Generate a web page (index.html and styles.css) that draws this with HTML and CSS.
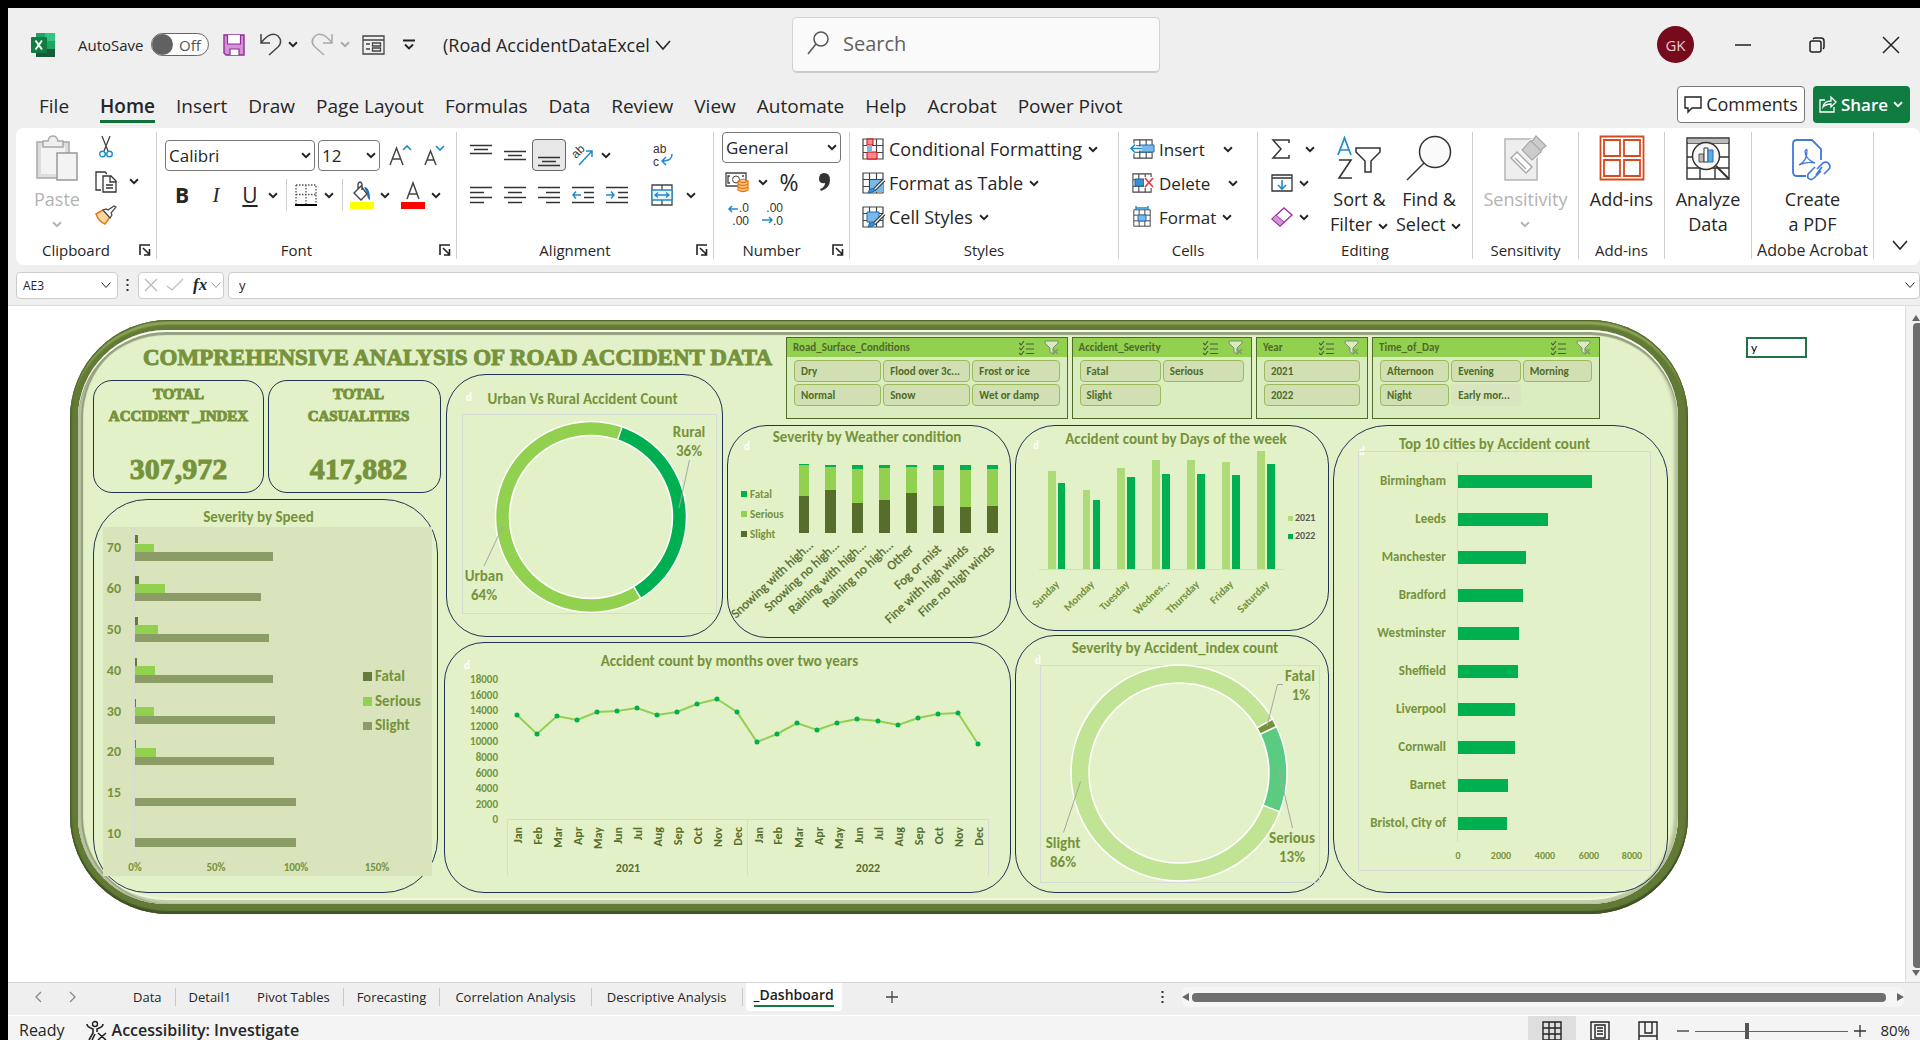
FILE: index.html
```html
<!DOCTYPE html>
<html lang="en">
<head>
<meta charset="utf-8">
<title>Road AccidentDataExcel</title>
<link rel="stylesheet" href="styles.css">
</head>
<body>
<svg class="defs" aria-hidden="true">
  <symbol id="chev" viewBox="0 0 10 8"><path d="M1.500 2 5 5.500 8.500 2" fill="none" stroke="currentColor" stroke-width="1.700"/></symbol>
  <symbol id="chev-big" viewBox="0 0 16 12"><path d="M1 2 8 10 15 2" fill="none" stroke="currentColor" stroke-width="1.600"/></symbol>
  <symbol id="launch" viewBox="0 0 12 12"><path d="M1 11V1h10M4 4l6 6M10.500 5v6H5" fill="none" stroke="#222" stroke-width="1.600"/></symbol>
  <symbol id="multi" viewBox="0 0 15 14"><path d="M0 2l2 2 3-4M0 7l2 2 3-4M0 12l2 2 3-4M7 3h8M7 8h8M7 12.500h8" fill="none" stroke="#4c5a3c" stroke-width="1.100"/></symbol>
  <symbol id="funnel" viewBox="0 0 16 16"><path d="M1 1h13v2L9 8v6l-3-2V8L1 3z" fill="#d9ecc0" stroke="#7f8f70"/><path d="M9 9l5 5M14 9l-5 5" stroke="#7f9a60" stroke-width="1.200"/></symbol>
  <symbol id="sheet" viewBox="0 0 22 22"><path d="M1 1h20v20H1zM1 7.500h20M1 14.500h20M7.500 1v20M14.500 1v20" fill="#fff" stroke="#444" stroke-width="1.200"/></symbol>
</svg>
<div class="app">
  <header class="titlebar">
    <svg class="logo" width="24" height="24" viewBox="0 0 24 24"><path d="M5 0h19v24H5z" fill="#21a366"/><path d="M14 0h10v8H14z" fill="#33c481"/><path d="M5 8h9v8H5z" fill="#107c41"/><path d="M14 16h10v8H5v-8z" fill="#185c37"/><rect y="4" width="16" height="16" rx="1" fill="#107c41"/><path d="M4.500 7.500l6.500 9M11 7.500l-6.500 9" stroke="#fff" stroke-width="2"/></svg>
    <label class="autosave" for="autosave">AutoSave</label>
    <span class="toggle"><input id="autosave" type="checkbox"><span>Off</span></span>
    <button class="ico save" aria-label="Save"><svg width="22" height="22" viewBox="0 0 22 22"><path d="M1 1h20v20H3l-2-2z" fill="#d691d9" stroke="#8d2f96" stroke-width="1.400"/><path d="M4.500 1v9h13V1M7 21v-6h9v6" fill="#fff" stroke="#8d2f96" stroke-width="1.200"/></svg></button>
    <button class="ico undo" aria-label="Undo"><svg width="22" height="23" viewBox="0 0 22 23"><path d="M1 1v9h9M1 10C8 1 14 0 18 3c4 4 3 8 0 11l-9 8" fill="none" stroke="#444" stroke-width="1.500"/></svg><svg class="cv"><use href="#chev"/></svg></button>
    <button class="ico redo" aria-label="Redo"><svg width="22" height="23" viewBox="0 0 22 23"><path d="M21 1v9h-9M21 10C14 1 8 0 4 3 0 7 1 11 4 14l9 8" fill="none" stroke="#aaa" stroke-width="1.500"/></svg><svg class="cv"><use href="#chev"/></svg></button>
    <button class="ico form" aria-label="Form"><svg width="23" height="20" viewBox="0 0 23 20"><path d="M1 1h21v18H1zM1 5h21M4 9h4M4 14h4M10.500 8h8v3h-8zM10.500 13h8v3h-8z" fill="none" stroke="#444" stroke-width="1.300"/></svg></button>
    <button class="ico custom" aria-label="Customize"><svg width="12" height="12" viewBox="0 0 12 12"><path d="M0 1.500h12M2 5.500l4 4 4-4" fill="none" stroke="#222" stroke-width="1.800"/></svg></button>
    <button class="doc">(Road AccidentDataExcel <svg width="16" height="12"><use href="#chev-big"/></svg></button>
    <label class="search"><svg width="22" height="24" viewBox="0 0 22 24"><circle cx="14" cy="8" r="7" fill="none" stroke="#555" stroke-width="1.500"/><path d="M9 13 1 23" stroke="#555" stroke-width="1.500"/></svg><input type="text" placeholder="Search" aria-label="Search"></label>
    <div class="window">
      <button class="avatar">GK</button>
      <button aria-label="Minimize"><svg width="16" height="16"><path d="M0 8h16" stroke="#222" stroke-width="1.500"/></svg></button>
      <button aria-label="Restore"><svg width="16" height="16" viewBox="0 0 16 16"><rect x="1" y="4" width="11" height="11" rx="2" fill="none" stroke="#222" stroke-width="1.500"/><path d="M4 2q1-1 2-1h6q3 0 3 3v6q0 1-1 2" fill="none" stroke="#222" stroke-width="1.500"/></svg></button>
      <button aria-label="Close"><svg width="16" height="16"><path d="M0 0l16 16M16 0 0 16" stroke="#222" stroke-width="1.500"/></svg></button>
    </div>
  </header>
  <nav class="tabs">
    <a href="#">File</a><a href="#" class="on">Home</a><a href="#">Insert</a><a href="#">Draw</a><a href="#">Page Layout</a><a href="#">Formulas</a><a href="#">Data</a><a href="#">Review</a><a href="#">View</a><a href="#">Automate</a><a href="#">Help</a><a href="#">Acrobat</a><a href="#">Power Pivot</a>
    <button class="comments"><svg width="18" height="18" viewBox="0 0 18 18"><path d="M1 2h16v11H8l-4 4v-4H1z" fill="none" stroke="#222" stroke-width="1.400"/></svg>Comments</button>
    <button class="share"><svg width="18" height="18" viewBox="0 0 18 18"><path d="M6 5H1v12h14v-5M4 12q1-6 8-6V2l5 5-5 5V9Q7 9 4 12z" fill="none" stroke="#fff" stroke-width="1.300"/></svg>Share<svg class="cv"><use href="#chev"/></svg></button>
  </nav>
  <section class="ribbon">
    <div class="group clip">
      <div class="body">
        <button class="big dim"><svg width="42" height="46" viewBox="0 0 42 46"><path d="M1 7h32v36H1z" fill="#ddd" stroke="#a9a9a9" stroke-width="1.500"/><path d="M5 11h24v28H5z" fill="#f3f3f3"/><path d="M7 12V6h5q1-5 5-5t5 5h5v6z" fill="#eee" stroke="#a9a9a9" stroke-width="1.500"/><path d="M21 18h20v27H21z" fill="#f3f3f3" stroke="#999" stroke-width="1.500"/></svg>Paste<svg class="cv"><use href="#chev"/></svg></button>
        <div class="stack">
          <button aria-label="Cut"><svg width="14" height="22" viewBox="0 0 14 22"><path d="M3 0l6 15M11 0 5 15" stroke="#444" stroke-width="1.300"/><circle cx="3.500" cy="18" r="2.800" fill="none" stroke="#1e8bcd" stroke-width="1.400"/><circle cx="10.500" cy="18" r="2.800" fill="none" stroke="#1e8bcd" stroke-width="1.400"/></svg></button>
          <button aria-label="Copy"><svg width="22" height="22" viewBox="0 0 22 22"><path d="M6 19H1V1h9l2 2M8 5h8l5 5v11H8zM15 5v6h6M11 14h7M11 17h7" fill="none" stroke="#333" stroke-width="1.300"/></svg></button>
          <button aria-label="Format Painter"><svg width="22" height="18" viewBox="0 0 22 18"><path d="M1 8l7-4 7 7-5 7q-6-2-9-10z" fill="#fbd7a5" stroke="#e57a12" stroke-width="1.500"/><path d="M8 4l3-1 2 1 6-4 2 1-5 6 1 2-2 3z" fill="#fff" stroke="#444" stroke-width="1.200"/></svg></button>
        </div>
        <svg class="cv"><use href="#chev"/></svg>
      </div>
      <div class="cap more">Clipboard<svg width="12" height="12"><use href="#launch"/></svg></div>
    </div>
    <div class="group font">
      <div class="body col">
        <div class="row r1">
          <span class="sel"><select aria-label="Font"><option>Calibri</option></select><svg class="cv"><use href="#chev"/></svg></span>
          <span class="sel small"><select aria-label="Size"><option>12</option></select><svg class="cv"><use href="#chev"/></svg></span>
          <button class="t" aria-label="Grow font"><svg width="22" height="22" viewBox="0 0 22 22"><path d="M1 21 7.500 4 14 21M3.500 15h8" fill="none" stroke="#444" stroke-width="1.500"/><path d="M14 6l4-4 4 4" fill="none" stroke="#1e8bcd" stroke-width="1.600"/></svg></button>
          <button class="t" aria-label="Shrink font"><svg width="20" height="22" viewBox="0 0 20 22"><path d="M1 21 6.500 7 12 21M3 16h7" fill="none" stroke="#444" stroke-width="1.500"/><path d="M12 2l4 4 4-4" fill="none" stroke="#1e8bcd" stroke-width="1.600"/></svg></button>
        </div>
        <div class="row r2">
          <button class="t"><b>B</b></button><button class="t"><i>I</i></button><button class="t"><u>U</u></button><svg class="cv"><use href="#chev"/></svg>
          <span class="bar"></span>
          <button class="t" aria-label="Borders"><svg width="22" height="22" viewBox="0 0 22 22"><path d="M1 1h20v19M1 1v19M11 1v19M1 10.500h20" fill="none" stroke="#555" stroke-dasharray="1.500 1.500" stroke-width="1.300"/><path d="M0 21h22" stroke="#000" stroke-width="2"/></svg></button><svg class="cv"><use href="#chev"/></svg>
          <span class="bar"></span>
          <button class="t" aria-label="Fill color"><svg width="24" height="28" viewBox="0 0 24 28"><path d="M4 12l7-7 6 8-6 6zM8 8V3q2-4 4 0v6" fill="none" stroke="#444" stroke-width="1.400"/><path d="M14 6q6 0 6 13-3-1-3-7z" fill="#1e6fb8"/><path d="M0 21h24v7H0z" fill="#ff0"/></svg></button><svg class="cv"><use href="#chev"/></svg>
          <button class="t" aria-label="Font color"><svg width="24" height="28" viewBox="0 0 24 28"><path d="M6 18 12 2l6 16M8 13h8" fill="none" stroke="#444" stroke-width="1.500"/><path d="M0 21h24v7H0z" fill="red"/></svg></button><svg class="cv"><use href="#chev"/></svg>
        </div>
      </div>
      <div class="cap more">Font<svg width="12" height="12"><use href="#launch"/></svg></div>
    </div>
    <div class="group align">
      <div class="body col">
        <div class="row r1">
          <button class="t" aria-label="Top"><svg width="22" height="22"><path d="M0 1.500h22M4 5.500h14M0 9.500h22" stroke="#333" stroke-width="1.300"/></svg></button>
          <button class="t" aria-label="Middle"><svg width="22" height="22"><path d="M0 7.500h22M4 11.500h14M0 15.500h22" stroke="#333" stroke-width="1.300"/></svg></button>
          <button class="t pressed" aria-label="Bottom"><svg width="22" height="22"><path d="M0 13.500h22M4 17.500h14M0 21.500h22" stroke="#333" stroke-width="1.300"/></svg></button>
          <button class="t" aria-label="Orientation"><svg width="22" height="22" viewBox="0 0 22 22"><text class="ab" transform="translate(4 15) rotate(-45)">ab</text><path d="M7 21 20 7M14 7h6v6" fill="none" stroke="#1e8bcd" stroke-width="1.500"/></svg></button><svg class="cv"><use href="#chev"/></svg>
          <button class="t wrap" aria-label="Wrap text"><svg width="22" height="26" viewBox="0 0 22 26"><text class="ab" x="1" y="11">ab</text><text class="ab" x="1" y="24">c</text><path d="M20 12q0 7-9 7M14 15l-4 4 4 4" fill="none" stroke="#1e8bcd" stroke-width="1.500"/></svg></button>
        </div>
        <div class="row r2">
          <button class="t" aria-label="Left"><svg width="22" height="18"><path d="M0 1.500h22M0 6.500h14M0 11.500h22M0 16.500h14" stroke="#333" stroke-width="1.300"/></svg></button>
          <button class="t" aria-label="Center"><svg width="22" height="18"><path d="M0 1.500h22M4 6.500h14M0 11.500h22M4 16.500h14" stroke="#333" stroke-width="1.300"/></svg></button>
          <button class="t" aria-label="Right"><svg width="22" height="18"><path d="M0 1.500h22M8 6.500h14M0 11.500h22M8 16.500h14" stroke="#333" stroke-width="1.300"/></svg></button>
          <button class="t" aria-label="Decrease indent"><svg width="22" height="18"><path d="M0 1.500h22M12 6.500h10M12 11.500h10M0 16.500h22" stroke="#333" stroke-width="1.300"/><path d="M9 9H1M4 5.500 1 9l3 3.500" fill="none" stroke="#1e8bcd" stroke-width="1.500"/></svg></button>
          <button class="t" aria-label="Increase indent"><svg width="22" height="18"><path d="M0 1.500h22M12 6.500h10M12 11.500h10M0 16.500h22" stroke="#333" stroke-width="1.300"/><path d="M0 9h8M5 5.500 8 9l-3 3.500" fill="none" stroke="#1e8bcd" stroke-width="1.500"/></svg></button>
          <button class="t merge" aria-label="Merge"><svg width="22" height="22" viewBox="0 0 22 22"><path d="M1 1h20v20H1zM11 1v5M11 16v5" fill="#fff" stroke="#444" stroke-width="1.300"/><path d="M1 6h20v10H1zM4 11h14M7 8.500 4 11l3 2.500M15 8.500l3 2.500-3 2.500" fill="#eaf4fb" stroke="#1e8bcd" stroke-width="1.300"/></svg></button><svg class="cv"><use href="#chev"/></svg>
        </div>
      </div>
      <div class="cap more">Alignment<svg width="12" height="12"><use href="#launch"/></svg></div>
    </div>
    <div class="group num">
      <div class="body col">
        <span class="sel"><select aria-label="Number format"><option>General</option></select><svg class="cv"><use href="#chev"/></svg></span>
        <div class="row n2">
          <button class="t" aria-label="Currency"><svg width="24" height="20" viewBox="0 0 24 20"><path d="M1 1h20v13H1zM5 4H3v7h2M17 4h2" fill="none" stroke="#444" stroke-width="1.300"/><circle cx="11" cy="7.500" r="3.500" fill="none" stroke="#444"/><path d="M13 9v9q5 3 10 0V9z" fill="#fbc98a"/><path d="M13 9q5-3 10 0v9q-5 3-10 0zM13 9q5 3 10 0M13 12q5 3 10 0M13 15q5 3 10 0" fill="none" stroke="#e57a12" stroke-width="1.300"/></svg></button><svg class="cv"><use href="#chev"/></svg>
          <button class="t pct">%</button><button class="t comma" aria-label="Comma style"><svg width="11" height="18" viewBox="0 0 11 18"><path d="M5 0q6 0 6 7 0 8-9 11l-1-2q5-2 5-6-6 1-6-4 0-6 5-6z" fill="#333"/></svg></button>
        </div>
        <div class="row n3">
          <button class="t" aria-label="Increase decimal"><svg width="22" height="26" viewBox="0 0 22 26"><path d="M10 8H1M4 5 1 8l3 3" fill="none" stroke="#1e8bcd" stroke-width="1.500"/><text class="dec" x="21" y="11">.0</text><text class="dec" x="21" y="24">.00</text></svg></button>
          <button class="t" aria-label="Decrease decimal"><svg width="22" height="26" viewBox="0 0 22 26"><path d="M0 19h10M7 16l3 3-3 3" fill="none" stroke="#1e8bcd" stroke-width="1.500"/><text class="dec" x="21" y="11">.00</text><text class="dec" x="21" y="24">.0</text></svg></button>
        </div>
      </div>
      <div class="cap more">Number<svg width="12" height="12"><use href="#launch"/></svg></div>
    </div>
    <div class="group styles">
      <div class="body col list">
        <button><svg width="22" height="22"><use href="#sheet"/><path d="M5 1h6v6H5zM5 14h10v7H5z" fill="#ff8a92" stroke="#d6000d"/><path d="M5 7h5v7H5z" fill="#7ab8ea"/></svg>Conditional Formatting <svg class="cv"><use href="#chev"/></svg></button>
        <button><svg width="22" height="22"><use href="#sheet"/><path d="M8 8h13v12H8z" fill="#7ab8ea"/><path d="M22 8 12 18" stroke="#333" stroke-width="3.500"/><path d="M22 8 12 18" stroke="#fff" stroke-width="1.200"/><path d="M6 21q2-6 6-4 3 3-6 4z" fill="#3a8fd4" stroke="#1b6cb0"/></svg>Format as Table <svg class="cv"><use href="#chev"/></svg></button>
        <button><svg width="22" height="22"><use href="#sheet"/><path d="M5 6h12v10H5z" fill="#7ab8ea" stroke="#1e6fb8"/><path d="M22 8 12 18" stroke="#333" stroke-width="3.500"/><path d="M22 8 12 18" stroke="#fff" stroke-width="1.200"/><path d="M6 21q2-6 6-4 3 3-6 4z" fill="#3a8fd4" stroke="#1b6cb0"/></svg>Cell Styles <svg class="cv"><use href="#chev"/></svg></button>
      </div>
      <div class="cap">Styles</div>
    </div>
    <div class="group cells">
      <div class="body col list">
        <button><svg width="24" height="20" viewBox="0 0 24 20"><use href="#sheet" x="2" width="22" height="20"/><path d="M10 6h14v7H10z" fill="#7ab8ea" stroke="#1e6fb8"/><path d="M12 9.500H1M5 5.500l-4 4 4 4" fill="none" stroke="#fff" stroke-width="4"/><path d="M12 9.500H1M5 5.500l-4 4 4 4" fill="none" stroke="#1e8bcd" stroke-width="1.600"/></svg>Insert <svg class="cv far"><use href="#chev"/></svg></button>
        <button><svg width="24" height="20" viewBox="0 0 24 20"><use href="#sheet" x="1" width="22" height="20"/><path d="M5 6h9v7H5z" fill="#3a8fd4" stroke="#1b5fa0"/><path d="M14 4h10v11H14z" fill="#fff"/><path d="M15 5l8 9M23 5l-8 9" stroke="#e8404a" stroke-width="1.800"/></svg>Delete <svg class="cv far"><use href="#chev"/></svg></button>
        <button><svg width="24" height="22" viewBox="0 0 24 22"><use href="#sheet" x="1" y="3" width="22" height="18"/><path d="M8 9h8v6H8z" fill="#7ab8ea" stroke="#1e6fb8"/><path d="M6 2h12M6 0v4M18 0v4" stroke="#1e8bcd" stroke-width="1.400"/></svg>Format <svg class="cv"><use href="#chev"/></svg></button>
      </div>
      <div class="cap">Cells</div>
    </div>
    <div class="group edit">
      <div class="body">
        <div class="col list">
          <button aria-label="Sum"><svg width="22" height="20" viewBox="0 0 22 20"><path d="M18 4V1H2l8 9-8 9h16v-3" fill="none" stroke="#333" stroke-width="1.500"/></svg><svg class="cv far"><use href="#chev"/></svg></button>
          <button aria-label="Fill"><svg width="22" height="18" viewBox="0 0 22 18"><path d="M1 1h20v16H1zM1 4h20" fill="none" stroke="#333" stroke-width="1.300"/><path d="M11 6v9M7 11l4 4 4-4" fill="none" stroke="#1e8bcd" stroke-width="1.600"/></svg><svg class="cv"><use href="#chev"/></svg></button>
          <button aria-label="Clear"><svg width="22" height="20" viewBox="0 0 22 20"><path d="M1 12 13 1l8 7L9 19z" fill="#fff" stroke="#9b35a6" stroke-width="1.400"/><path d="M1 12l4-4 8 7-4 4z" fill="#d691d9" stroke="#9b35a6"/></svg><svg class="cv"><use href="#chev"/></svg></button>
        </div>
        <button class="big"><svg width="44" height="46" viewBox="0 0 44 46"><path d="M1 20 7.500 3 14 20M3 15h9" fill="none" stroke="#1e8bcd" stroke-width="1.700"/><path d="M2 25h12L2 43h13" fill="none" stroke="#333" stroke-width="1.600"/><path d="M19 13h24v4l-9 9v11h-6V26l-9-9z" fill="none" stroke="#333" stroke-width="1.500"/></svg><span>Sort &amp;<br>Filter <svg class="cv"><use href="#chev"/></svg></span></button>
        <button class="big"><svg width="46" height="46" viewBox="0 0 46 46"><circle cx="29" cy="17" r="15.500" fill="#fafafa" stroke="#333" stroke-width="1.500"/><path d="M18 28 1 45" stroke="#333" stroke-width="1.500"/></svg><span>Find &amp;<br>Select <svg class="cv"><use href="#chev"/></svg></span></button>
      </div>
      <div class="cap">Editing</div>
    </div>
    <div class="group sens">
      <div class="body"><button class="big dim"><svg width="44" height="46" viewBox="0 0 44 46"><path d="M2 4h32v41H2z" fill="#eee" stroke="#b5b5b5" stroke-width="1.500"/><path d="M8 23l6-6 15 15-6 6zM12 23l11 11" fill="#fff" stroke="#aaa" stroke-width="1.500"/><path d="M19 15l8-9 3-1 3-4 10 10-4 3-1 3-9 8z" fill="#ccc" stroke="#fff" stroke-width="3"/><path d="M19 15l8-9 3-1 3-4 10 10-4 3-1 3-9 8zM28 6l10 10" fill="#ccc" stroke="#aaa" stroke-width="1.300"/></svg>Sensitivity<svg class="cv"><use href="#chev"/></svg></button></div>
      <div class="cap">Sensitivity</div>
    </div>
    <div class="group adds">
      <div class="body"><button class="big"><svg width="46" height="46" viewBox="0 0 46 46"><path d="M1.500 1.500h43v43h-43zM5 5h16v16H5zM25 5h16v16H25zM5 25h16v16H5zM25 25h16v16H25z" fill="none" stroke="#d8491d" stroke-width="1.800"/></svg>Add-ins</button></div>
      <div class="cap">Add-ins</div>
    </div>
    <div class="group anal">
      <div class="body"><button class="big"><svg width="44" height="46" viewBox="0 0 44 46"><path d="M1 3h42v41H1zM1 8h42M1 22h42M1 33h42M14 33v11M29 33v11" fill="#fff" stroke="#333" stroke-width="1.400"/><path d="M2 4h40v4H2z" fill="#bbb"/><circle cx="20" cy="21" r="13.500" fill="#f7f7f7" stroke="#333" stroke-width="1.500"/><path d="M30 31l13 13" stroke="#333" stroke-width="2"/><path d="M13 19h5v8h-5z" fill="#bbb" stroke="#555"/><path d="M18 13h4v14h-4z" fill="#fff" stroke="#333"/><path d="M22 15h5v12h-5z" fill="#5aaee8" stroke="#1e6fb8"/></svg><span>Analyze<br>Data</span></button></div>
      <div class="cap"></div>
    </div>
    <div class="group acro">
      <div class="body"><button class="big"><svg width="40" height="46" viewBox="0 0 40 46"><path d="M14 41H5q-4 0-4-4V9q0-4 4-4h15l9 9v11" fill="none" stroke="#3f78e0" stroke-width="1.800"/><path d="M7 30q8-4 8-14 0-3-2 0 0 8 10 12-8-2-16 2z" fill="none" stroke="#3f78e0" stroke-width="1.300"/><path d="M25 34l6-6q4-2 6 1 2 3 0 5l-5 5M29 36l-7 7q-3 3-6 0-1-3 1-5l6-6M24 40l6-8" fill="none" stroke="#3f78e0" stroke-width="1.700"/></svg><span>Create<br>a PDF</span></button></div>
      <div class="cap">Adobe Acrobat</div>
    </div>
    <button class="collapse" aria-label="Collapse"><svg width="16" height="12"><use href="#chev-big"/></svg></button>
  </section>
  <section class="formula">
    <label class="name"><input type="text" value="AE3" aria-label="Name box"><svg width="10" height="8"><use href="#chev-big"/></svg></label>
    <svg class="dots" width="3" height="14"><path d="M1.500 1v13" stroke="#333" stroke-width="2" stroke-dasharray="2 3"/></svg>
    <div class="fx"><button aria-label="Cancel"><svg width="12" height="12"><path d="M0 0l12 12M12 0 0 12" stroke="#bbb" stroke-width="1.300"/></svg></button><button aria-label="Enter"><svg width="16" height="12"><path d="M0 7l5 4L16 0" fill="none" stroke="#bbb" stroke-width="1.300"/></svg></button><button class="f">fx</button><svg width="10" height="8" color="#999"><use href="#chev-big"/></svg></div>
    <label class="entry"><input type="text" value="y" aria-label="Formula"><svg width="10" height="8"><use href="#chev-big"/></svg></label>
  </section>
  <main class="sheet">
    <div class="frame"><div class="board">
      <h1>COMPREHENSIVE ANALYSIS OF ROAD ACCIDENT DATA</h1>
      <div class="slicers">
        <section class="slicer road"><h3>Road_Surface_Conditions<svg width="15" height="14"><use href="#multi"/></svg><svg width="16" height="16"><use href="#funnel"/></svg></h3><div class="opts"><button>Dry</button><button>Flood over 3c...</button><button>Frost or ice</button><button>Normal</button><button>Snow</button><button>Wet or damp</button></div></section>
        <section class="slicer sev"><h3>Accident_Severity<svg width="15" height="14"><use href="#multi"/></svg><svg width="16" height="16"><use href="#funnel"/></svg></h3><div class="opts"><button>Fatal</button><button>Serious</button><button>Slight</button></div></section>
        <section class="slicer year"><h3>Year<svg width="15" height="14"><use href="#multi"/></svg><svg width="16" height="16"><use href="#funnel"/></svg></h3><div class="opts"><button>2021</button><button>2022</button></div></section>
        <section class="slicer time"><h3>Time_of_Day<svg width="15" height="14"><use href="#multi"/></svg><svg width="16" height="16"><use href="#funnel"/></svg></h3><div class="opts"><button>Afternoon</button><button>Evening</button><button>Morning</button><button>Night</button><button class="off">Early mor...</button></div></section>
      </div>
      <div class="left">
        <div class="kpis">
          <section class="kpi"><h2>TOTAL<br>ACCIDENT _INDEX</h2><p>307,972</p></section>
          <section class="kpi"><h2>TOTAL<br>CASUALITIES</h2><p>417,882</p></section>
        </div>
        <section class="card speed"><h2>Severity by Speed</h2>
          <svg viewBox="94 500 343 392">
            <path d="M103 527h329v349H103z" fill="#d9e4bd"/>
            <path d="M134.500 527v328M131 527.500h4M131 568.500h4M131 609.500h4M131 650.500h4M131 691.500h4M131 731.500h4M131 772.500h4M131 813.500h4M131 854.500h4" class="ax"/>
            <path d="M135 535h3v8h-3zM135 576h4v8h-4zM135 617h3v8h-3zM135 658h2v8h-2zM135 699h1v8h-1zM135 740h1v8h-1z" fill="#667c3b"/>
            <path d="M135 544h19v8h-19zM135 584h30v9h-30zM135 625h23v9h-23zM135 666h20v9h-20zM135 707h19v9h-19zM135 748h21v9h-21z" fill="#92d050"/>
            <path d="M135 552h138v9H135zM135 593h126v8H135zM135 634h134v8H135zM135 675h138v8H135zM135 716h140v8H135zM135 757h139v8H135zM135 798h161v8H135zM135 838h161v9H135z" fill="#8b9c66"/>
            <g class="t14 e"><text x="121" y="552">70</text><text x="121" y="593">60</text><text x="121" y="634">50</text><text x="121" y="675">40</text><text x="121" y="716">30</text><text x="121" y="756">20</text><text x="121" y="797">15</text><text x="121" y="838">10</text></g>
            <g class="t11 m"><text x="135" y="871">0%</text><text x="216" y="871">50%</text><text x="296" y="871">100%</text><text x="377" y="871">150%</text></g>
            <path d="M363 672h9v9h-9z" fill="#667c3b"/><path d="M363 697h9v9h-9z" fill="#92d050"/><path d="M363 722h9v8h-9z" fill="#8b9c66"/>
            <g class="t15"><text x="375" y="681">Fatal</text><text x="375" y="706">Serious</text><text x="375" y="730">Slight</text></g>
          </svg></section>
      </div>
      <section class="card urban"><h2>Urban Vs Rural Accident Count</h2>
        <svg viewBox="447 375 275 261">
          <text class="d" x="466" y="401">d</text>
          <path d="M462.500 414.500h254v199h-254z" class="ax"/>
          <circle cx="591" cy="517" r="88.500" fill="none" stroke="#92d050" stroke-width="14"/>
          <path d="M619.800 433.300A88.500 88.500 0 0 1 637.200 592.500" fill="none" stroke="#00b050" stroke-width="14"/>
          <g fill="none" stroke="#fff" stroke-width="1.500"><circle cx="591" cy="517" r="95.500"/><circle cx="591" cy="517" r="81.500"/><path d="M617.700 439.500l4.200-12.300M633.800 586.900l6.800 11.100"/></g>
          <path d="M689.500 460 679 508M503 526l-19 40" class="lead"/>
          <g class="t15 m"><text x="689" y="437">Rural</text><text x="689" y="456">36%</text><text x="484" y="581">Urban</text><text x="484" y="600">64%</text></g>
        </svg></section>
      <section class="card weather"><h2>Severity by Weather condition</h2>
        <svg viewBox="728 426 282 211">
          <text class="d" x="744" y="450">d</text>
          <path d="M799 464h10v69h-10zM825 465h11v68h-11zM852 465h11v68h-11zM879 465h11v68h-11zM906 465h11v68h-11zM933 465h11v68h-11zM960 465h11v68h-11zM987 465h11v68h-11z" fill="#92d050"/>
          <path d="M799 464h10v1h-10zM825 465h11v2h-11zM852 465h11v4h-11zM879 465h11v3h-11zM906 465h11v2h-11zM933 465h11v5h-11zM960 465h11v5h-11zM987 465h11v4h-11z" fill="#00b050"/>
          <path d="M799 496h10v37h-10zM825 490h11v43h-11zM852 503h11v30h-11zM879 500h11v33h-11zM906 493h11v40h-11zM933 506h11v27h-11zM960 507h11v26h-11zM987 506h11v27h-11z" fill="#566d2c"/>
          <path d="M741 491h6v6h-6z" fill="#00b050"/><path d="M741 511h6v6h-6z" fill="#92d050"/><path d="M741 531h6v6h-6z" fill="#566d2c"/>
          <g class="t11"><text x="750" y="498">Fatal</text><text x="750" y="518">Serious</text><text x="750" y="538">Slight</text></g>
          <g class="w e"><text transform="translate(814 546) rotate(-43)">Snowing with high...</text><text transform="translate(840 546) rotate(-43)">Snowing no high...</text><text transform="translate(867 546) rotate(-43)">Raining with high...</text><text transform="translate(894 546) rotate(-43)">Raining no high...</text><text transform="translate(914 550) rotate(-43)">Other</text><text transform="translate(942 550) rotate(-43)">Fog or mist</text><text transform="translate(969 550) rotate(-43)">Fine with high winds</text><text transform="translate(995 550) rotate(-43)">Fine no high winds</text></g>
        </svg></section>
      <div class="right">
        <section class="card days"><h2>Accident count by Days of the week</h2>
          <svg viewBox="1016 426 312 204">
            <text class="d" x="1033" y="449">d</text>
            <path d="M1048 471h8v98h-8zM1083 490h7v79h-7zM1117 468h8v101h-8zM1152 460h8v109h-8zM1187 460h8v109h-8zM1222 462h8v107h-8zM1257 451h8v118h-8z" fill="#addb78"/>
            <path d="M1058 483h7v86h-7zM1093 500h7v69h-7zM1127 477h8v92h-8zM1162 474h8v95h-8zM1197 474h8v95h-8zM1232 475h8v94h-8zM1267 464h8v105h-8z" fill="#00b050"/>
            <path d="M1039 569.500h245" class="ax"/>
            <path d="M1288 516h5v5h-5z" fill="#addb78"/><path d="M1288 534h5v5h-5z" fill="#00b050"/>
            <g class="t10 grey"><text x="1295" y="521">2021</text><text x="1295" y="539">2022</text></g>
            <g class="t11 e"><text transform="translate(1060 585) rotate(-45)">Sunday</text><text transform="translate(1095 585) rotate(-45)">Monday</text><text transform="translate(1130 585) rotate(-45)">Tuesday</text><text transform="translate(1170 583) rotate(-45)">Wednes...</text><text transform="translate(1200 585) rotate(-45)">Thursday</text><text transform="translate(1234 585) rotate(-45)">Friday</text><text transform="translate(1270 585) rotate(-45)">Saturday</text></g>
          </svg></section>
        <section class="card index"><h2>Severity by Accident_index count</h2>
          <svg viewBox="1016 636 312 256">
            <text class="d" x="1035" y="664">d</text>
            <path d="M1040.500 665.500h279v217h-279z" class="ax"/>
            <circle cx="1179" cy="773" r="99" fill="none" stroke="#c1e394" stroke-width="18"/>
            <path d="M1264.700 723.500A99 99 0 0 1 1268.400 730.400" fill="none" stroke="#76923c" stroke-width="18"/>
            <path d="M1268.400 730.400A99 99 0 0 1 1271.400 808.500" fill="none" stroke="#5bcb82" stroke-width="18"/>
            <g fill="none" stroke="#fff" stroke-width="1.500"><circle cx="1179" cy="773" r="108"/><circle cx="1179" cy="773" r="90"/><path d="M1256.900 728l15.600-9M1260.200 734.300l16.300-7.800M1263 805.300l16.800 6.400"/></g>
            <path d="M1283 684.500h-5.500L1267 726M1278.500 769l14 59M1080.500 781.500l-17 51" class="lead"/>
            <g class="t15 m"><text x="1300" y="681">Fatal</text><text x="1301" y="700">1%</text><text x="1292" y="843">Serious</text><text x="1292" y="862">13%</text><text x="1063" y="848">Slight</text><text x="1063" y="867">86%</text></g>
          </svg></section>
      </div>
      <section class="card months"><h2>Accident count by months over two years</h2>
        <svg viewBox="445 643 565 249">
          <text class="d" x="464" y="669">d</text>
          <g class="t11 e"><text x="498" y="683">18000</text><text x="498" y="699">16000</text><text x="498" y="714">14000</text><text x="498" y="730">12000</text><text x="498" y="745">10000</text><text x="498" y="761">8000</text><text x="498" y="777">6000</text><text x="498" y="792">4000</text><text x="498" y="808">2000</text><text x="498" y="823">0</text></g>
          <path d="M507.500 876v-56.500h481V876M747.500 820v56" class="ax"/>
          <path class="trend" d="M517 715L537 734L557 716L577 720L597 712L617 711L637 708L657 715L677 712L697 704L717 699L737 712L757 742L777 734L797 723L817 730L837 723L857 719L878 721L898 725L918 718L938 714L958 713L978 744"/>
          <path class="pts" d="M517 715h0M537 734h0M557 716h0M577 720h0M597 712h0M617 711h0M637 708h0M657 715h0M677 712h0M697 704h0M717 699h0M737 712h0M757 742h0M777 734h0M797 723h0M817 730h0M837 723h0M857 719h0M878 721h0M898 725h0M918 718h0M938 714h0M958 713h0M978 744h0"/>
          <g class="t12 dark e"><text transform="translate(522 827) rotate(-90)">Jan</text><text transform="translate(542 827) rotate(-90)">Feb</text><text transform="translate(562 827) rotate(-90)">Mar</text><text transform="translate(582 827) rotate(-90)">Apr</text><text transform="translate(602 827) rotate(-90)">May</text><text transform="translate(622 827) rotate(-90)">Jun</text><text transform="translate(642 827) rotate(-90)">Jul</text><text transform="translate(662 827) rotate(-90)">Aug</text><text transform="translate(682 827) rotate(-90)">Sep</text><text transform="translate(702 827) rotate(-90)">Oct</text><text transform="translate(722 827) rotate(-90)">Nov</text><text transform="translate(742 827) rotate(-90)">Dec</text><text transform="translate(763 827) rotate(-90)">Jan</text><text transform="translate(782 827) rotate(-90)">Feb</text><text transform="translate(803 827) rotate(-90)">Mar</text><text transform="translate(823 827) rotate(-90)">Apr</text><text transform="translate(843 827) rotate(-90)">May</text><text transform="translate(863 827) rotate(-90)">Jun</text><text transform="translate(883 827) rotate(-90)">Jul</text><text transform="translate(903 827) rotate(-90)">Aug</text><text transform="translate(923 827) rotate(-90)">Sep</text><text transform="translate(943 827) rotate(-90)">Oct</text><text transform="translate(963 827) rotate(-90)">Nov</text><text transform="translate(983 827) rotate(-90)">Dec</text></g>
          <g class="t12 dark m"><text x="628" y="872">2021</text><text x="868" y="872">2022</text></g>
        </svg></section>
      <section class="card cities"><h2>Top 10 cities by Accident count</h2>
        <svg viewBox="1334 426 333 466">
          <text class="d" x="1359" y="455">d</text>
          <path d="M1358.500 451.500h292v419h-292zM1457.500 462v380" class="ax"/>
          <path d="M1458 475h134v13h-134zM1458 513h90v13h-90zM1458 551h68v13h-68zM1458 589h65v13h-65zM1458 627h61v13h-61zM1458 665h60v13h-60zM1458 703h57v13h-57zM1458 741h57v13h-57zM1458 779h50v13h-50zM1458 817h49v13h-49z" fill="#00b050"/>
          <g class="t13 e"><text x="1446" y="485">Birmingham</text><text x="1446" y="523">Leeds</text><text x="1446" y="561">Manchester</text><text x="1446" y="599">Bradford</text><text x="1446" y="637">Westminster</text><text x="1446" y="675">Sheffield</text><text x="1446" y="713">Liverpool</text><text x="1446" y="751">Cornwall</text><text x="1446" y="789">Barnet</text><text x="1446" y="827">Bristol, City of</text></g>
          <g class="t10 m"><text x="1458" y="859">0</text><text x="1501" y="859">2000</text><text x="1545" y="859">4000</text><text x="1589" y="859">6000</text><text x="1632" y="859">8000</text></g>
        </svg></section>
    </div></div>
    <div class="cell">y</div>
    <div class="vscroll"><span class="up"></span><span class="thumb"></span><span class="down"></span></div>
  </main>
  <nav class="sheets">
    <svg class="nav" width="41" height="10" viewBox="0 0 41 10"><path d="M6 0 1 5l5 5M35 0l5 5-5 5" fill="none" stroke="#888" stroke-width="1.300"/></svg>
    <a href="#">Data</a><a href="#" class="nb">Detail1</a><a href="#">Pivot Tables</a><a href="#">Forecasting</a><a href="#" class="wide">Correlation Analysis</a><a href="#" class="wide">Descriptive Analysis</a><a href="#" class="on"><span>_Dashboard</span></a>
    <button class="add" aria-label="New sheet"><svg width="12" height="12"><path d="M6 0v12M0 6h12" stroke="#444" stroke-width="1.300"/></svg></button>
    <svg class="dots" width="3" height="14"><path d="M1.500 1v13" stroke="#333" stroke-width="2" stroke-dasharray="2 3"/></svg>
    <div class="hscroll"><span class="lt"></span><span class="thumb"></span><span class="rt"></span></div>
  </nav>
  <footer class="status">
    <span>Ready</span>
    <svg class="acc" width="22" height="20" viewBox="0 0 22 20"><circle cx="9" cy="3" r="2.500" fill="none" stroke="#222" stroke-width="1.400"/><path d="M1 3q0 3 6 5v4L3 19M17 3q0 3-6 5v3M9 13l-3 6M12 12l8 7M20 12l-8 7" fill="none" stroke="#222" stroke-width="1.600"/></svg>
    <b>Accessibility: Investigate</b>
    <button class="view on" aria-label="Normal"><svg width="20" height="20"><path d="M1 1h18v18H1zM1 7h18M1 13h18M7 1v18M13 1v18" fill="none" stroke="#222" stroke-width="1.400"/></svg></button>
    <button class="view" aria-label="Page layout"><svg width="20" height="20"><path d="M1 1h18v18H1zM5 4h10v13H5zM7 7h6M7 10h6M7 13h6" fill="none" stroke="#222" stroke-width="1.400"/></svg></button>
    <button class="view" aria-label="Page break"><svg width="20" height="20"><path d="M1 19V1h18v18M7 1v11h7V1M1 15h18" fill="none" stroke="#222" stroke-width="1.400"/></svg></button>
    <svg class="minus" width="12" height="12"><path d="M0 6h12" stroke="#333" stroke-width="1.300"/></svg>
    <input class="zoom" type="range" min="0" max="300" value="100" aria-label="Zoom">
    <svg class="plus" width="12" height="12"><path d="M6 0v12M0 6h12" stroke="#333" stroke-width="1.300"/></svg>
    <span class="pc">80%</span>
  </footer>
</div>
</body>
</html>
```
FILE: styles.css
```css
* { box-sizing: border-box; }
body { margin: 0; background: #000; padding: 8px 0 0 8px; font-family: "Open Sans", "Noto Sans", sans-serif; color: #262626; }
button, input, select { font: inherit; color: inherit; background: none; border: 0; padding: 0; margin: 0; }
button { display: flex; align-items: center; justify-content: center; white-space: nowrap; }
a { color: inherit; text-decoration: none; white-space: nowrap; }
h1, h2, h3, p { margin: 0; }
svg { flex: none; overflow: visible; }
.defs { position: absolute; width: 0; height: 0; }
.cv { width: 12px; height: 9px; color: #222; }
.app { display: flex; flex-direction: column; height: calc(100vh - 8px); overflow: hidden; background: #efefef; }

/* title bar */
.titlebar { display: flex; align-items: center; height: 73px; padding-left: 23px; flex: none; font-size: 15px; }
.autosave { margin-left: 23px; width: 73px; }
.toggle { display: flex; align-items: center; width: 58px; height: 23px; border: 1px solid #666; border-radius: 12px; background: #fff; color: #555; gap: 6px; }
.toggle input { appearance: none; width: 21px; height: 21px; border-radius: 50%; background: #616161; }
.save { margin-left: 14px; }
.undo { margin-left: 15px; gap: 5px; }
.redo { margin-left: 12px; gap: 6px; }
.redo .cv { color: #aaa; }
.form { margin-left: 11px; }
.custom { margin-left: 18px; }
.doc { margin-left: 28px; font-size: 18px; gap: 5px; }
.search { display: flex; align-items: center; gap: 14px; margin-left: auto; width: 368px; height: 56px; background: #fafafa; border: 1px solid #d2d2d2; border-bottom: 2px solid #ccc; border-radius: 5px; padding: 0 14px 2px; }
.search input { font-size: 20px; flex: 1; min-width: 0; }
.search input::placeholder { color: #616161; opacity: 1; }
.window { display: flex; align-items: center; margin-left: 497px; margin-right: 21px; gap: 58px; }
.avatar { width: 37px; height: 37px; border-radius: 50%; background: #750b1c; color: #e9c9ce; font-size: 15px; margin-right: -17px; }

/* ribbon tabs */
.tabs { display: flex; align-items: center; gap: 21px; height: 47px; padding: 0 0 1px 31px; flex: none; font-size: 19px; }
.tabs a { line-height: 28px; padding-top: 7px; border-bottom: 3px solid transparent; }
.tabs a:first-child { margin-right: 10px; }
.tabs .on { font-weight: 600; border-color: #0f703b; }
.comments, .share { height: 37px; border-radius: 4px; gap: 4px; }
.comments { margin-left: auto; margin-right: -13px; width: 128px; background: #fff; border: 1px solid #777; font-size: 18px; }
.share { margin-right: 10px; width: 97px; background: #107c41; color: #fff; font-weight: 600; font-size: 17px; }
.share .cv { color: #fff; }

/* ribbon */
.ribbon { display: flex; flex: none; height: 137px; margin-left: 8px; background: #fff; border-radius: 8px; padding: 4px 0 6px; font-size: 17px; }
.group { display: flex; flex-direction: column; border-right: 1px solid #cfcfcf; flex: none; }
.group .body { display: flex; flex: 1; min-height: 0; }
.group .col { flex-direction: column; }
.row { display: flex; align-items: center; }
.cap { display: flex; flex: none; justify-content: center; align-items: center; height: 18px; font-size: 15px; white-space: nowrap; position: relative; }
.more { padding-right: 20px; }
.acro .cap { font-size: 16px; }
.cap svg { position: absolute; right: 5px; top: 3px; }
.big { flex-direction: column; justify-content: flex-start; gap: 6px; line-height: 25px; padding-top: 3px; text-align: center; font-size: 18px; }
.big .cv { margin-top: 2px; }
.dim, .dim .cv { color: #b3b3b3; }
.t { width: 34px; height: 32px; flex: none; }
.clip { width: 141px; }
.clip .body { padding-left: 16px; }
.clip .big { width: 50px; }
.stack { display: flex; flex-direction: column; gap: 13px; width: 28px; margin: 4px 8px 0 10px; align-items: center; }
.clip .body > .cv { margin-top: 45px; }
.font { width: 300px; }
.font .body { padding-left: 8px; }
.r1 { margin-top: 7px; height: 32px; }
.r2 { margin-top: 8px; height: 32px; }
.sel { display: grid; width: 150px; height: 31px; border: 1px solid #777; border-radius: 4px; align-items: center; }
.sel > * { grid-area: 1 / 1; }
.sel select { appearance: none; width: 100%; padding: 0 3px; height: 29px; }
.sel .cv { justify-self: end; margin-right: 2px; }
.sel.small { width: 62px; margin: 0 3px; }
.font .r2 { font-size: 21px; }
.font i { font-family: "Liberation Serif", serif; }
.font .r2 .cv { margin-right: 3px; }
.bar { width: 1px; height: 32px; background: #cfcfcf; margin: 0 4px; }
.bar + .t, .font .cv + .t { width: 30px; }
.font .cv + .t { margin-left: 4px; }
.font .t[aria-label] + .cv { margin-left: 2px; }
.align { width: 257px; }
.align .body { padding-left: 7px; }
.pressed { background: #e8e8e8; border: 1px solid #666; border-radius: 4px; }
.ab, .dec { font-family: "Liberation Sans", sans-serif; font-size: 12px; fill: #333; }
.dec { text-anchor: end; }
.wrap { margin-left: 34px; }
.merge { margin-left: 11px; }
.align .merge + .cv { margin-left: 6px; }
.num { width: 136px; }
.num .body { padding-left: 8px; }
.num .sel { width: 119px; }
.n2 { height: 38px; }
.n2 .t { width: 30px; }
.n2 .t + .cv { margin: 0 5px; }
.n2 .pct { font-size: 23px; }
.n2 .comma { margin-left: 5px; }
.n3 { height: 26px; }
.styles { width: 269px; }
.list { gap: 6px; align-items: flex-start; padding-top: 3px; display: flex; font-size: 18px; }
.list button { gap: 5px; height: 28px; }
.list .far { margin-left: 12px; }
.styles .body { padding-left: 12px; }
.cells { width: 139px; }
.cells .body { padding-left: 11px; font-size: 17px; }
.edit { width: 215px; }
.edit .list { padding-left: 13px; width: 64px; }
.edit .list .far { margin-left: 6px; }
.edit .big { margin-left: 8px; }
.edit .big + .big { margin-left: 7px; }
.sens { width: 106px; }
.adds { width: 86px; }
.anal { width: 87px; }
.acro { width: 122px; }
.sens .body, .adds .body, .anal .body, .acro .body { justify-content: center; }
.collapse { align-self: flex-end; margin: 0 auto; padding-left: 6px; height: 28px; }

/* formula bar */
.formula { display: flex; flex: none; align-items: center; height: 41px; padding-left: 8px; border-bottom: 1px solid #dcdcdc; font-size: 13px; }
.formula label, .fx { display: flex; align-items: center; height: 27px; background: #fff; border: 1px solid #ccc; border-radius: 4px; }
.name { width: 102px; padding: 0 6px; }
.name input { flex: 1; min-width: 0; font-size: 12px; }
.dots { margin: 0 9px 0 8px; }
.fx { width: 86px; padding: 0 1px 0 6px; gap: 10px; }
.fx > svg { margin-left: -6px; }
.f { font: italic bold 17px "Liberation Serif", serif; }
.entry { flex: 1; margin-left: 4px; padding: 0 4px 0 10px; }
.entry input { flex: 1; }

/* worksheet */
.sheet { display: flex; flex: 1; min-height: 0; background: #fff; padding: 14px 0 0 62px; align-items: flex-start; }
.frame { flex: 1; min-width: 0; padding: 10px 10px 10px 8px; border-radius: 98px; background: #617a35; box-shadow: inset 0 0 2px 1px #3f5220, inset 0 4px 1px #8fa85c, inset 0 -3px 1px #45562a, inset 0 5px 2px #7b9448; }
.board { display: grid; grid-template-columns: 349fr 277fr 284fr 314fr 335fr; grid-template-rows: 84px 213px 251px; gap: 4px; padding: 7px 10px 11px 15px; border-radius: 88px; background: #e3f1c8; box-shadow: inset 0 2px 0 #fbfdf0, inset 0 5px 1px #95a080, inset 3px 0 1px #b9c5a0, inset 5px 0 1px #8f9b78, inset -4px 0 3px #b5c09c, inset 0 -4px 0 #c5cfae, inset 0 -6px 1px #f1f9dc; font-family: Carlito, Calibri, Lato, sans-serif; color: #76933c; }
h1 { grid-area: 1 / 1 / 2 / 3; padding: 5px 0 0 50px; font: bold 23px/32px "Liberation Serif", serif; -webkit-text-stroke: 1px #76933c; white-space: nowrap; }
.slicers { grid-area: 1 / 3 / 2 / 6; display: flex; gap: 4px; margin: 0 68px 0 59px; align-items: flex-start; }
.slicer { height: 82px; border: 1px solid #4f6b28; background: #d9edc0; color: #4f6b28; font-size: 11px; min-width: 0; }
.slicer h3 { display: flex; align-items: center; height: 19px; background: #92d050; padding: 0 7px 0 6px; font-size: 11px; gap: 10px; }
.slicer h3 svg:first-of-type { margin-left: auto; }
.opts { display: grid; grid-template-columns: repeat(3, minmax(0, 1fr)); gap: 2px; padding: 3px 7px 0; }
.opts button { height: 22px; justify-content: flex-start; padding-left: 6px; background: #d1dfb3; border: 1px solid #9bbb59; border-radius: 4px; font-weight: 700; }
.opts .off { border-color: transparent; background: #d9e5bf; }
.road { flex: 282; }
.sev { flex: 180; }
.year { flex: 111; }
.time { flex: 228; }
.sev .opts { grid-template-columns: repeat(2, 1fr); }
.year .opts { grid-template-columns: 1fr; }
.left { grid-area: 1 / 1 / 4 / 2; display: flex; flex-direction: column; gap: 6px; margin-top: 43px; }
.kpis { display: grid; grid-template-columns: 171fr 173fr; gap: 4px; height: 113px; margin-right: 1px; }
.kpi { border: 1px solid #1f3354; border-radius: 19px; text-align: center; font-family: "Liberation Serif", serif; font-weight: bold; -webkit-text-stroke: 1px #76933c; }
.kpi + .kpi { padding-left: 8px; }
.kpi h2 { font-size: 15px; line-height: 22px; padding-top: 2px; }
.kpi p { font-size: 30px; line-height: 30px; padding-top: 27px; }
.card { display: grid; border: 1px solid #1f3354; border-radius: 40px; min-height: 0; }
.card > * { grid-area: 1 / 1; min-height: 0; }
.card svg { width: 100%; height: 100%; }
.card h2 { font-size: 15px; line-height: 18px; text-align: center; z-index: 1; }
.speed { flex: 1; border-radius: 54px; margin-right: 4px; }
.speed h2 { padding: 8px 14px 0 0; }
.urban { grid-area: 1 / 2 / 3 / 3; margin: 37px 0 1px; }
.urban h2 { padding: 15px 4px 0 0; }
.weather { grid-area: 2 / 3 / 3 / 4; }
.weather h2 { padding: 2px 4px 0 0; }
.right { grid-area: 2 / 4 / 4 / 5; display: flex; flex-direction: column; gap: 4px; }
.days { height: 206px; }
.days h2 { padding: 4px 0 0 8px; }
.index { flex: 1; }
.index h2 { padding: 3px 0 0 6px; }
.months { grid-area: 3 / 2 / 4 / 4; margin-left: -2px; }
.months h2 { padding: 9px 0 0 4px; }
.cities { grid-area: 2 / 5 / 4 / 6; border-radius: 54px; }
.cities h2 { padding: 9px 12px 0 0; }
.ax { fill: none; stroke: #d6dad6; }
.lead { fill: none; stroke: #a6a6a6; stroke-width: 1; }
.trend { fill: none; stroke: #92d050; stroke-width: 2; }
.pts { fill: none; stroke: #00b050; stroke-width: 5; stroke-linecap: round; }
.card text { fill: #76933c; font-weight: 700; }
.card .d { fill: #fff; font-size: 11px; }
.t10 { font-size: 10px; }
.t11 { font-size: 11px; }
.t12 { font-size: 12px; }
.t13 { font-size: 13px; }
.t14 { font-size: 14px; }
.t15 { font-size: 15px; }
.m { text-anchor: middle; }
.e { text-anchor: end; }
.w { font-size: 13px; }
.card .w text { font-weight: 400; fill: #566d2c; stroke: #566d2c; stroke-width: 0.3px; }
.card .dark text { fill: #566d2c; }
.card .grey text { fill: #595959; }
.cell { width: 61px; height: 21px; margin: 17px 98px 0 58px; border: 2px solid #217346; font: 12px/18px Lato, sans-serif; padding-left: 3px; color: #000; }
.vscroll { align-self: stretch; margin-top: -14px; width: 15px; border-left: 1px solid #ddd; background: #f3f3f3; display: flex; flex-direction: column; align-items: flex-end; padding: 5px 0 2px; gap: 2px; }
.vscroll .thumb { width: 7px; flex: 1; background: #6f6f6f; border-radius: 4px 0 0 4px; }
.up, .down { border: 4px solid transparent; }
.up { border-bottom: 6px solid #666; }
.down { border-top: 6px solid #666; }

/* sheet tabs */
.sheets { display: flex; flex: none; align-items: center; height: 33px; border-top: 1px solid #d5d5d5; font-size: 13px; padding: 0 0 4px 27px; }
.nav { margin-right: 44px; }
.sheets a { padding: 0 13px; line-height: 18px; border-right: 1px solid #c8c8c8; }
.sheets .nb { border-right: 0; }
.sheets .wide { padding: 0 15px; }
.sheets .on { align-self: flex-start; height: 28px; margin-left: 3px; background: #fff; border: 0; border-radius: 0 0 4px 4px; padding: 2px 8px 0; font-weight: 600; font-size: 14px; color: #1e1e1e; }
.sheets .on span { display: block; border-bottom: 2px solid #107c41; line-height: 20px; }
.add { margin-left: 44px; }
.sheets .dots { margin-left: auto; margin-right: 18px; }
.hscroll { display: flex; align-items: center; gap: 3px; width: 722px; margin-right: 16px; height: 20px; background: #f6f6f6; border-radius: 6px; }
.hscroll .thumb { flex: 1; height: 9px; background: #6f6f6f; border-radius: 4px; margin: 0 8px 0 0; }
.lt, .rt { border: 4px solid transparent; }
.lt { border-right: 7px solid #666; border-left: 0; }
.rt { border-left: 7px solid #666; border-right: 0; }

/* status bar */
.status { display: flex; flex: none; align-items: flex-start; height: 25px; background: #f4f4f4; border-top: 1px solid #fff; padding: 2px 10px 0 11px; font-size: 16px; line-height: 24px; overflow: hidden; }
.acc { margin: 3px 4px 0 21px; }
.status b { font-weight: 600; }
.view { width: 48px; height: 32px; align-items: flex-start; margin-top: -2px; padding-top: 5px; }
.view.on { margin-left: auto; background: #dedede; }
.minus { margin: 7px 6px 0 5px; }
.zoom { appearance: none; width: 153px; height: 16px; margin-top: 5px; background: linear-gradient(#666, #666) center / 100% 1px no-repeat; }
.zoom::-webkit-slider-thumb { appearance: none; width: 4px; height: 16px; background: #555; }
.plus { margin: 7px 14px 0 6px; }
.pc { font-size: 15px; }
```
